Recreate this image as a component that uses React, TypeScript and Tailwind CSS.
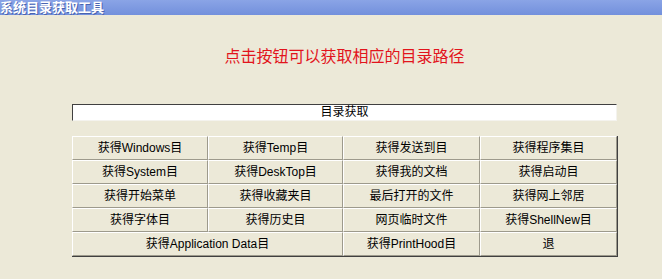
import React from 'react';

const font = { fontFamily: '"Liberation Sans", "Noto Sans CJK SC", sans-serif' };

// one classic raised button cell
const Btn = ({ label, span }: { label: string; span?: boolean }) => (
  <button
    className={`h-[24px] border-t border-l border-t-white border-l-white border-r border-b border-r-[#9d9a8c] border-b-[#9d9a8c] bg-[#ece9d8] text-[12px] text-black leading-[22px] ${
      span ? 'col-span-2' : ''
    }`}
  >
    {label}
  </button>
);

const App: React.FC = () => {
  const buttons = [
    '获得Windows目', '获得Temp目', '获得发送到目', '获得程序集目',
    '获得System目', '获得DeskTop目', '获得我的文档', '获得启动目',
    '获得开始菜单', '获得收藏夹目', '最后打开的文件', '获得网上邻居',
    '获得字体目', '获得历史目', '网页临时文件', '获得ShellNew目',
  ];

  return (
    <div className="w-[662px] h-[279px] bg-[#ece9d8] flex flex-col overflow-hidden" style={font}>
      {/* title bar */}
      <div className="h-[15px] bg-gradient-to-b from-[#8aa4e6] to-[#7390dc] text-white text-[13px] font-bold leading-[15px] [text-shadow:1px_1px_0_#4a64b0]">
        系统目录获取工具
      </div>

      <div className="ml-[72px] w-[545px] flex flex-col">
        <div className="mt-[33px] h-[18px] flex justify-center">
          <span className="text-[16px] leading-[18px] text-[#e2141c] whitespace-nowrap">
            点击按钮可以获取相应的目录路径
          </span>
        </div>

        <div className="mt-[38px] h-[17px] bg-white border-t border-l border-t-[#404040] border-l-[#404040] border-b border-r border-b-[#f4f3ee] border-r-[#f4f3ee] text-center text-[12px] leading-[15px] text-black">
          目录获取
        </div>

        <div className="mt-[15px] grid grid-cols-[136px_135px_137px_137px] w-[546px] border-r border-b border-r-[#404040] border-b-[#404040]">
          {buttons.map((b) => (
            <Btn key={b} label={b} />
          ))}
          <Btn label="获得Application Data目" span />
          <Btn label="获得PrintHood目" />
          <Btn label="退" />
        </div>
      </div>
    </div>
  );
};

export default App;
